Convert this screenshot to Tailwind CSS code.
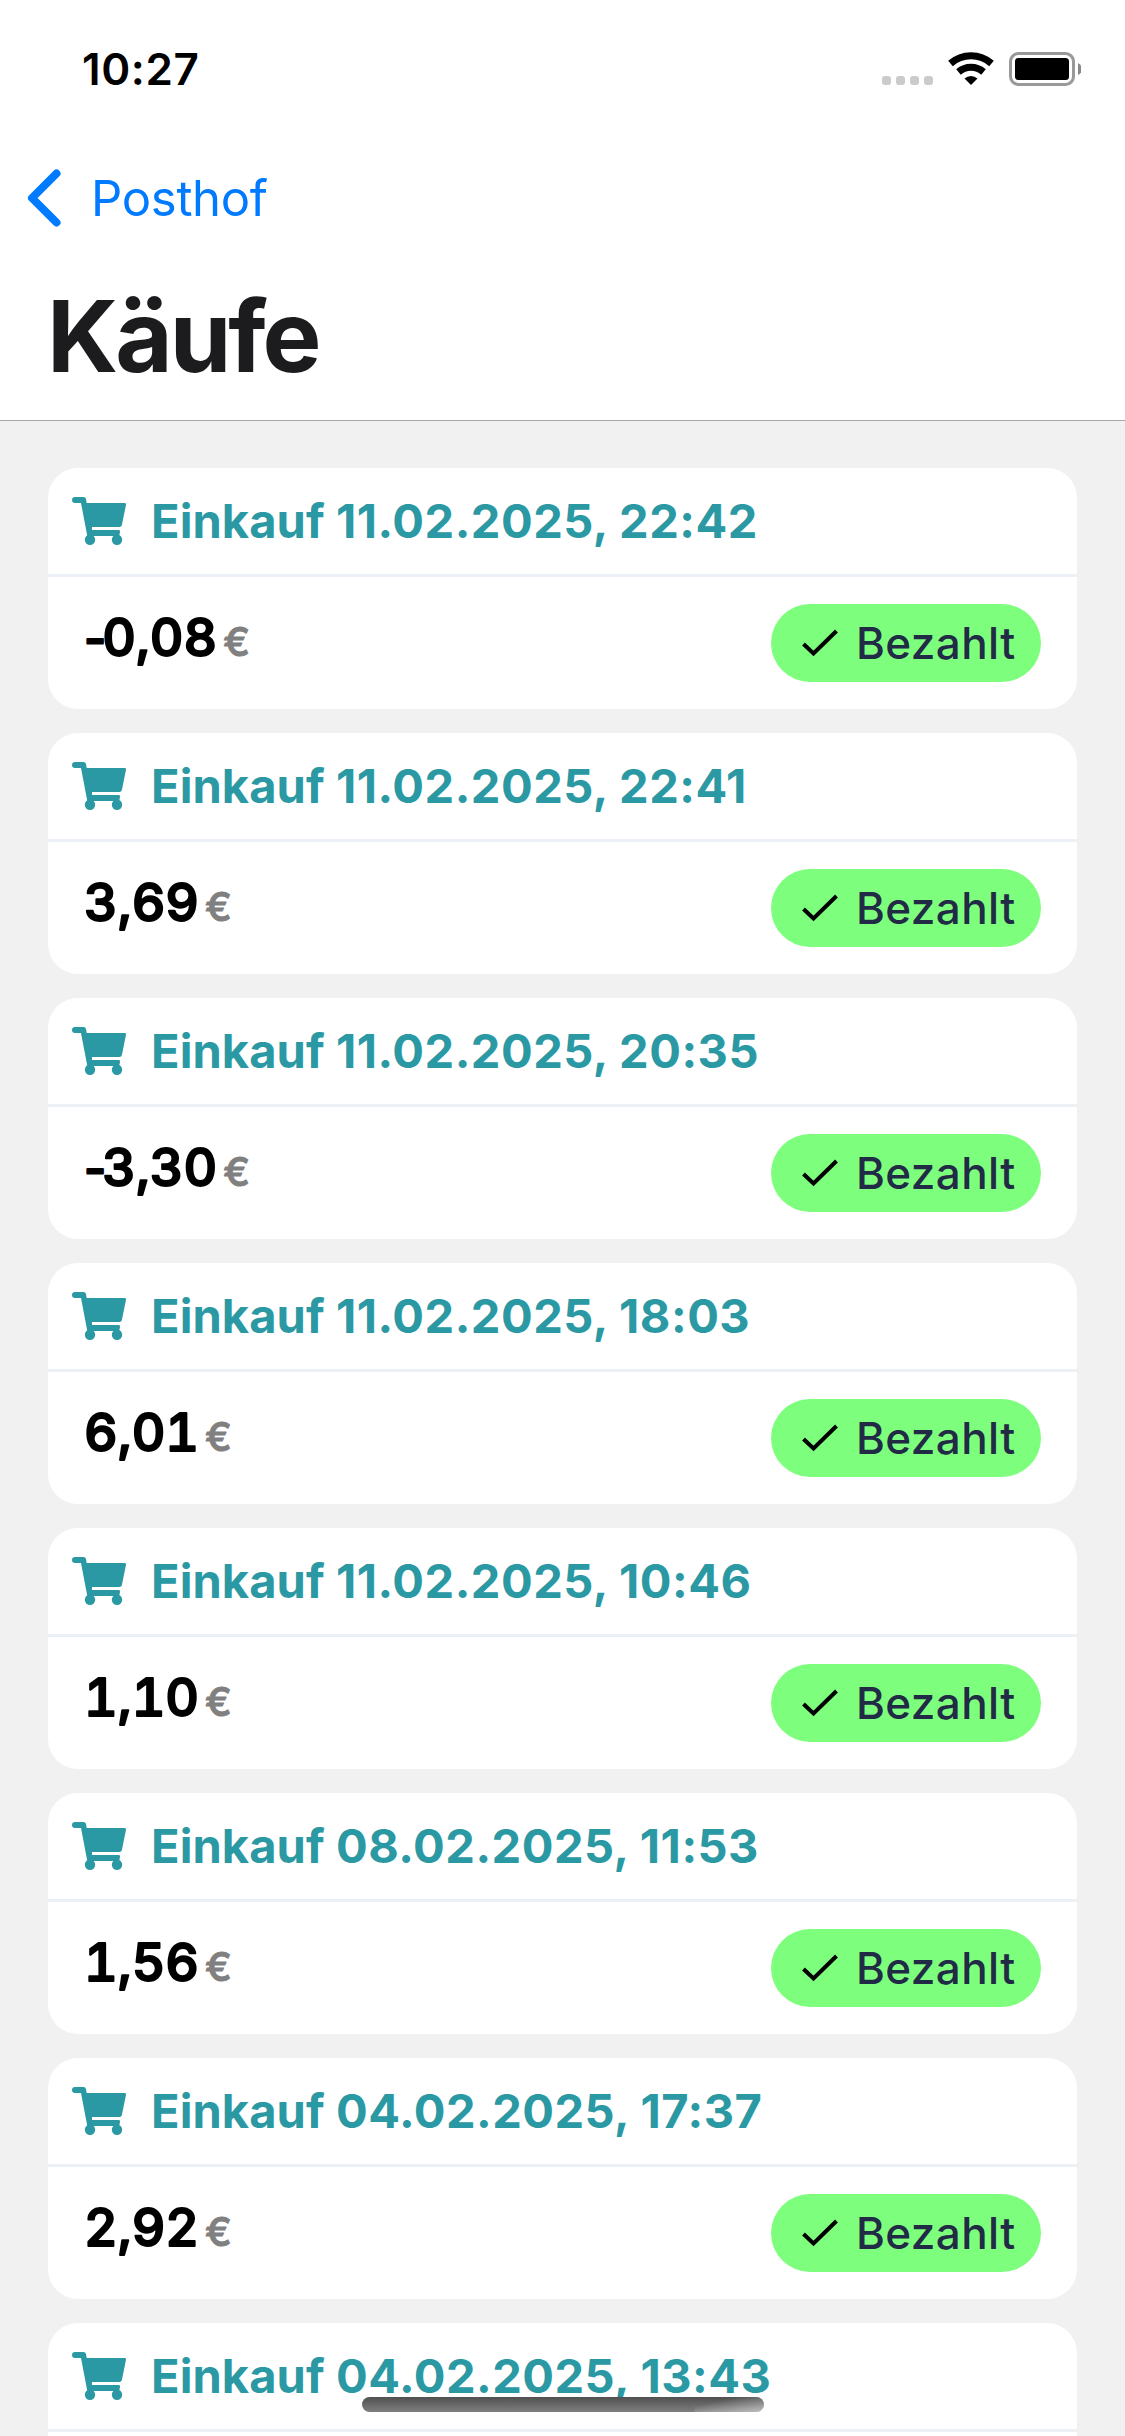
<!DOCTYPE html>
<html lang="de">
<head>
<meta charset="utf-8">
<title>Käufe</title>
<script src="https://cdn.jsdelivr.net/npm/@tailwindcss/browser@4"></script>
</head>
<body class="bg-[#f1f1f1]">
<div class="relative flex h-[2436px] w-[1125px] flex-col overflow-hidden bg-[#f1f1f1] font-['Inter',sans-serif]">
  <header class="flex h-[421px] shrink-0 flex-col border-b border-[#a7a7a7] bg-white">
    <div class="flex h-[138px] items-center justify-between pr-[44px] pl-[82px]">
      <div class="text-[44px] leading-none font-semibold tracking-[0.6px] text-black">10:27</div>
      <svg class="h-[36px] w-[204px]" viewBox="0 0 204 36">
        <g fill="#cbcbcb"><rect x="5" y="25" width="9" height="9" rx="3"/><rect x="19" y="25" width="9" height="9" rx="3"/><rect x="33" y="25" width="9" height="9" rx="3"/><rect x="47" y="25" width="9" height="9" rx="3"/></g>
        <g fill="none" stroke="#000" stroke-width="7"><path d="M73.500 12.500A31 31 0 0 1 114.500 12.500"/><path d="M81.500 21A19 19 0 0 1 106.500 21"/></g>
        <path d="M94 34L87.500 27.500A9.500 9.500 0 0 1 100.500 27.500Z"/>
        <rect x="133.500" y="2.500" width="63" height="31" rx="8" fill="none" stroke="#999" stroke-width="3"/>
        <rect x="138" y="7" width="54" height="22" rx="3.500"/>
        <path d="M201 12Q205 14 205 18T201 24Z" fill="#888"/>
      </svg>
    </div>
    <div class="flex h-[120px] items-center pl-[27px] text-[#007aff]">
      <svg class="h-[58px] w-[34px]" viewBox="0 0 34 58" fill="none" stroke="currentColor" stroke-width="8" stroke-linecap="round" stroke-linejoin="round"><path d="M29.500 4.500L5 29L29.500 53.500"/></svg>
      <span class="pl-[30px] text-[49px] leading-none tracking-[-0.3px]">Posthof</span>
    </div>
    <h1 class="pt-[29px] pl-[47px] text-[99px] leading-none font-bold tracking-[-3px] text-[#1c1c1e]">Käufe</h1>
  </header>
  <main id="list" class="flex flex-col gap-6 px-12 pt-[47px]"></main>
  <div class="absolute top-[2397px] left-[362px] h-[15px] w-[402px] overflow-hidden rounded-full bg-linear-to-b from-[#505050] to-[#7f7f7f]">
    <div class="ml-auto h-full w-[70px] bg-linear-to-br from-white/0 from-30% to-white/50"></div>
  </div>
</div>
<template id="card">
  <article class="flex h-[241px] shrink-0 flex-col rounded-[30px] bg-white">
    <div class="flex h-[109px] items-center border-b-3 border-[#edf0f7] pl-6 text-[#2b99a3]">
      <svg class="h-12 w-[54px]" viewBox="0 0 54 48" fill="currentColor"><path d="M3 0H11.500Q13.500 0 14 2L14.700 6H52.500Q54.200 6 54 7.800L49.900 28Q49.400 30 47.500 30H20V33H46.500Q48.300 33 48 35L47.200 39H15.300L9 6H3A3 3 0 0 1 3 0Z"/><circle cx="18" cy="42.800" r="5.200"/><circle cx="45" cy="42.800" r="5.200"/></svg>
      <h2 class="pb-0.5 pl-[25px] text-[47px] leading-none font-[650] tracking-[0.1px]">Einkauf <span class="tracking-[0.5px]" data-date></span></h2>
    </div>
    <div class="flex h-[132px] items-center justify-between px-9" data-details>
      <svg class="h-[132px] w-[260px]" viewBox="0 0 260 132" stroke-linejoin="round"><text y="78.500"><tspan class="fill-black stroke-black stroke-2 text-[48px] font-medium" data-sign></tspan><tspan class="fill-black stroke-black stroke-2 text-[52px] font-medium tabular-nums" data-amount></tspan><tspan dx="6" class="fill-[#808080] stroke-[#808080] stroke-1 text-[40px] font-medium">€</tspan></text></svg>
      <div class="flex h-[78px] w-[270px] items-center rounded-full bg-[#7dff7d] pl-[30px]">
        <svg class="h-[30px] w-[38px]" viewBox="0 0 38 30" fill="none" stroke="#000" stroke-width="4"><path d="M2.500 16L12.500 25.500L35.500 3"/></svg>
        <span class="pl-[17px] text-[44px] leading-none font-medium tracking-[0.4px] text-[#222b45]">Bezahlt</span>
      </div>
    </div>
  </article>
</template>
<script>
const purchases = [
  ["11.02.2025, 22:42", "-0,08"], ["11.02.2025, 22:41", "3,69"], ["11.02.2025, 20:35", "-3,30"], ["11.02.2025, 18:03", "6,01"],
  ["11.02.2025, 10:46", "1,10"], ["08.02.2025, 11:53", "1,56"], ["04.02.2025, 17:37", "2,92"], ["04.02.2025, 13:43", null]
];
const list = document.getElementById("list");
for (const [date, amount] of purchases) {
  const card = document.getElementById("card").content.cloneNode(true);
  card.querySelector("[data-date]").textContent = date;
  if (amount) {
    const negative = amount.startsWith("-");
    const number = card.querySelector("[data-amount]");
    number.textContent = amount.replace("-", "");
    if (negative) {
      card.querySelector("[data-sign]").textContent = "-";
      number.setAttribute("dx", "-4");
    }
  } else {
    card.querySelector("[data-details]").remove();
  }
  list.append(card);
}
</script>
</body>
</html>
